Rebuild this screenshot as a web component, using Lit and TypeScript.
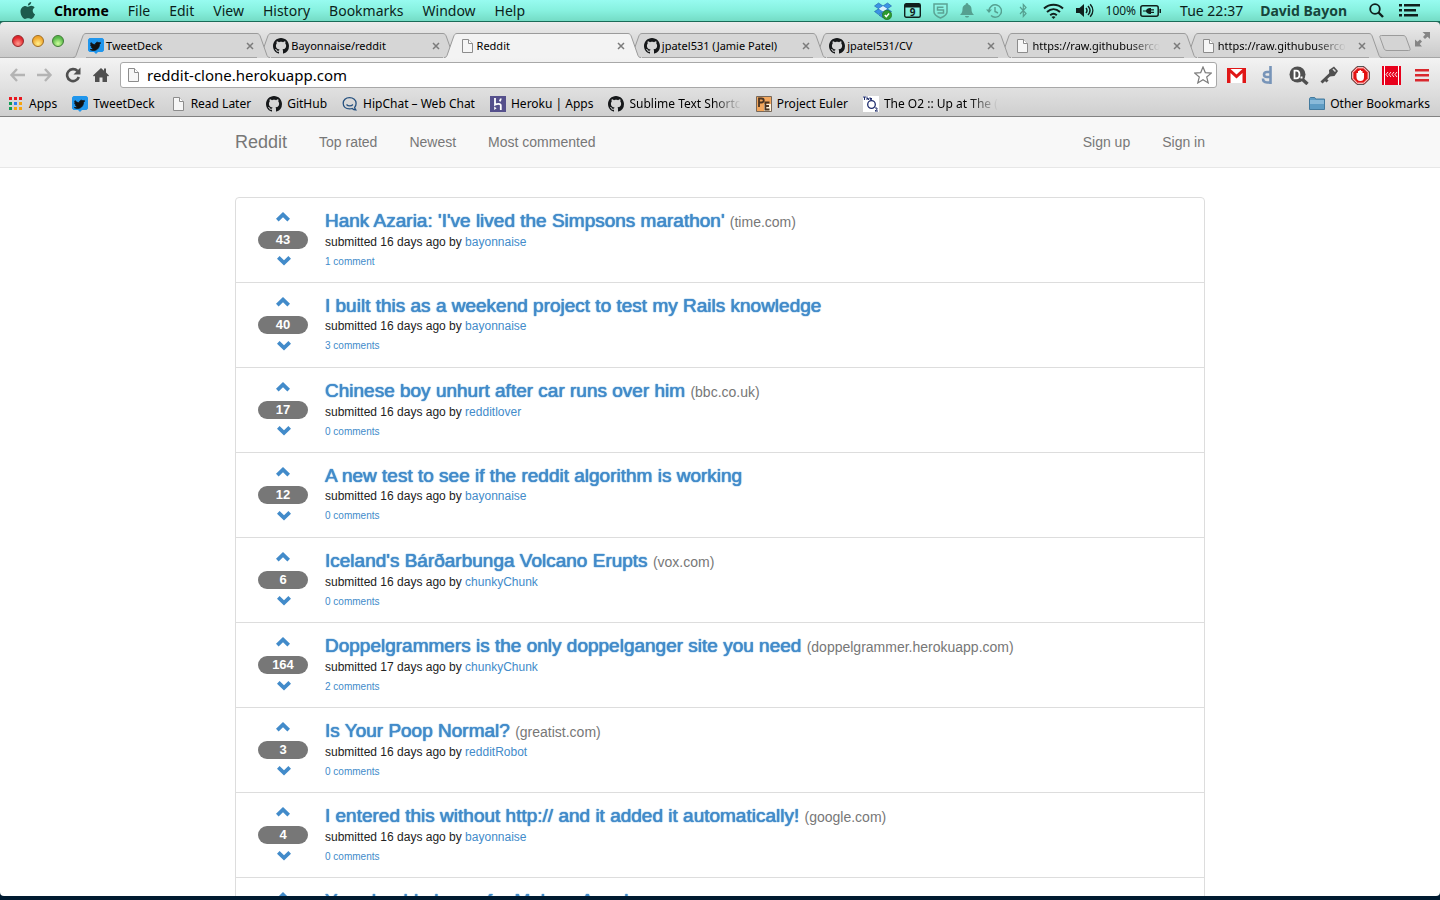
import { LitElement, html, svg, css, nothing } from "lit";
import { customElement } from "lit/decorators.js";
import { styleMap } from "lit/directives/style-map.js";

/* ---------- icons ---------- */

const birdPath =
  "M12.6 5.2c-.4.2-.8.3-1.2.4.4-.3.7-.7.9-1.2-.4.2-.9.4-1.3.5a2.1 2.1 0 0 0-3.6 1.9C5.600 6.700 4.100 5.900 3 4.600c-.6 1-.3 2.200.7 2.800-.4 0-.7-.1-1-.3 0 1 .7 1.900 1.700 2.100-.3.1-.6.1-.9 0 .3.800 1 1.400 1.900 1.500-.9.700-2 1-3.100.9 4 2.400 9.200-.1 9.200-5.300.4-.3.800-.700 1.100-1.100z";

const bird = svg`<path fill="#2196ec" d="M1.500 0h13L16 1.500v11L14.500 14H10l-2 2-2-2H1.500L0 12.500v-11z"/><path fill="#111" stroke="#111" stroke-width=".8" d=${birdPath}/>`;

const cat = svg`<path fill="#16181a" d="M8 0C3.580 0 0 3.580 0 8c0 3.540 2.290 6.530 5.470 7.590.4.070.55-.17.55-.38 0-.19-.01-.82-.01-1.490-2.010.37-2.530-.49-2.690-.94-.09-.23-.48-.94-.82-1.130-.28-.15-.68-.52-.01-.53.63-.01 1.080.58 1.230.82.72 1.210 1.870.87 2.330.66.070-.52.28-.87.51-1.070-1.780-.2-3.640-.89-3.640-3.950 0-.87.31-1.590.82-2.150-.08-.2-.36-1.020.08-2.120 0 0 .67-.21 2.200.82.64-.18 1.320-.27 2-.27s1.360.09 2 .27c1.530-1.040 2.200-.82 2.200-.82.44 1.100.16 1.920.08 2.120.51.56.82 1.270.82 2.150 0 3.070-1.870 3.750-3.650 3.950.29.25.54.73.54 1.480 0 1.070-.01 1.930-.01 2.200 0 .21.15.46.55.38A8.010 8.010 0 0 0 16 8c0-4.420-3.580-8-8-8z"/>`;

const sheet = svg`<path fill="#f6f6f6" stroke="#8c8c8c" d="M3.500 1.500h6l4 4v9h-10z"/><path fill="#fff" stroke="#8c8c8c" d="M9.500 1.500v4h4"/>`;

const apps = svg`
  <path fill="#e8171f" d="M1 1h3v3H1zM6 1h3v3H6zM11 1h3v3h-3z"/>
  <path fill="#109b54" d="M1 6h3v3H1zM1 11h3v3H1z"/>
  <path fill="#2a7df0" d="M6 6h3v3H6z"/>
  <path fill="#f6a40d" d="M11 6h3v3h-3zM6 11h3v3H6zM11 11h3v3h-3z"/>`;

const hipchat = svg`<path fill="none" stroke="#24507f" stroke-width="1.300" d="M7.500 1.600c-3.800 0-6.300 2.400-6.300 5.600s2.500 5.700 6.300 5.700c1 0 1.900-.1 2.700-.4 1 .9 2.300 1.500 3.600 1.400-.7-.8-1.100-1.600-1.200-2.500 1.100-1 1.500-2.500 1.500-4.200 0-3.200-2.800-5.600-6.600-5.600z"/><path fill="none" stroke="#24507f" stroke-width="1.200" d="M4.500 8.500c1.600 1.900 4.800 1.900 6.400 0"/>`;

const heroku = svg`<path fill="#55508c" d="M0 0h16v16H0z"/><path fill="none" stroke="#fff" stroke-width="1.800" d="M5 2v6.800c2-1 5.800-1.600 5.800.7V14M10.800 2.500c0 1-.4 2-1.200 2.700"/><path fill="#fff" d="M4.200 10.500L6.600 12.300 4.200 14z"/>`;

const euler = svg`<path fill="#f3a75d" stroke="#77685a" d="M.5.5h15v15H.5z"/><path fill="#fff3dd" d="M8 8h7v7H8z"/><path fill="none" stroke="#4b3422" stroke-width="1.800" d="M3 11V2.500h2.500c3 0 3 4 0 4H3M13.500 6.500H9.400v7h4.100M9.400 10h3.600"/>`;

const o2 = svg`<path fill="#fff" d="M0 0h16v16H0z"/><circle cx="8.500" cy="8.500" r="3.800" fill="none" stroke="#1c2a6b" stroke-width="1.300"/><path fill="none" stroke="#1c2a6b" d="M0 1h3M1.500 1v3M4 .5V4M4 2.500h1.500V4M7 2.500h2M7 1.300v2h2M12 12h2v1.500l-2 1.500h3"/>`;

const folder = svg`<path fill="#5e9cc4" stroke="#437a9e" d="M.5 2.500l.8-1h4.400l1 1.500h8.800v10.500H.5z"/><path fill="#9cc7e2" d="M1 4h14v4H1z" opacity=".7"/>`;

const icon = (body: unknown, w = 16, h = 16, vb = "0 0 16 16") =>
  html`<svg class="icon" width=${w} height=${h} viewBox=${vb} aria-hidden="true">${body}</svg>`;

/* ---------- data ---------- */

const menus = ["File", "Edit", "View", "History", "Bookmarks", "Window", "Help"];

const tabs = [
  { title: "TweetDeck", icon: bird },
  { title: "Bayonnaise/reddit", icon: cat },
  { title: "Reddit", icon: sheet, active: true },
  { title: "jpatel531 (Jamie Patel)", icon: cat },
  { title: "jpatel531/CV", icon: cat },
  { title: "https://raw.githubuserco", icon: sheet, long: true },
  { title: "https://raw.githubuserco", icon: sheet, long: true },
];

const bookmarks = [
  { title: "Apps", icon: apps },
  { title: "TweetDeck", icon: bird },
  { title: "Read Later", icon: sheet },
  { title: "GitHub", icon: cat },
  { title: "HipChat – Web Chat", icon: hipchat },
  { title: "Heroku | Apps", icon: heroku },
  { title: "Sublime Text Shortc", icon: cat, long: true },
  { title: "Project Euler", icon: euler },
  { title: "The O2 :: Up at The (", icon: o2, long: true },
];

const posts = [
  { title: "Hank Azaria: 'I've lived the Simpsons marathon'", site: "time.com", votes: 43, age: 16, by: "bayonnaise", comments: 1 },
  { title: "I built this as a weekend project to test my Rails knowledge", site: "", votes: 40, age: 16, by: "bayonnaise", comments: 3 },
  { title: "Chinese boy unhurt after car runs over him", site: "bbc.co.uk", votes: 17, age: 16, by: "redditlover", comments: 0 },
  { title: "A new test to see if the reddit algorithm is working", site: "", votes: 12, age: 16, by: "bayonnaise", comments: 0 },
  { title: "Iceland's Bárðarbunga Volcano Erupts", site: "vox.com", votes: 6, age: 16, by: "chunkyChunk", comments: 0 },
  { title: "Doppelgrammers is the only doppelganger site you need", site: "doppelgrammer.herokuapp.com", votes: 164, age: 17, by: "chunkyChunk", comments: 2 },
  { title: "Is Your Poop Normal?", site: "greatist.com", votes: 3, age: 16, by: "redditRobot", comments: 0 },
  { title: "I entered this without http:// and it added it automatically!", site: "google.com", votes: 4, age: 16, by: "bayonnaise", comments: 0 },
  { title: "You should always for Makers Ansel", site: "", votes: 2, age: 16, by: "bayonnaise", comments: 0 },
];

/* ---------- system menu bar ---------- */

@customElement("mac-menubar")
class MacMenubar extends LitElement {
  static styles = css`
    :host {
      display: flex;
      justify-content: space-between;
      align-items: center;
      height: 21px;
      padding: 0 20px;
      border-bottom: 1px solid #1c6b58;
      background: linear-gradient(#97fbf0, #87f1df 50%, #74dcc5);
      color: #0b1f1b;
      font: 14px/21px "Noto Sans", sans-serif;
    }
    .group { display: flex; align-items: center; gap: 19px; }
    .status { gap: 12px; }
    .item { border: 0; padding: 0; background: none; font: inherit; color: inherit; white-space: nowrap; }
    .app { font-weight: 700; color: #000; }
    .user { font-weight: 700; color: #17453b; padding-left: 5px; }
    .clock { padding-left: 7px; }
    .battery { display: flex; align-items: center; gap: 4px; font-size: 12px; }
    .icon { display: block; }
  `;
  render() {
    return html`
      <nav class="group" aria-label="Menu bar">
        ${icon(svg`<path fill="#1d5a4d" d="M11.200 0c.1 1.800-1.500 3.600-3.300 3.500C7.700 1.800 9.500.1 11.200 0zM8 4.700c.8 0 1.800-.9 3.300-.9 1.400 0 2.700.8 3.300 1.800-2.800 1.600-2.300 5.600.5 6.700-.7 2-2.200 4.700-3.900 4.700-1.200 0-1.700-.7-3.100-.7s-2 .7-3.100.7C3 17 .5 13.100.5 9.500c0-3.500 2.700-5.600 4.800-5.600 1.300 0 2.100.8 2.700.8z"/>`, 15, 18, "0 0 15 18")}
        <button class="item app">Chrome</button>
        ${menus.map((m) => html`<button class="item">${m}</button>`)}
      </nav>
      <div class="group status">
        ${icon(svg`<path fill="#3b93e4" stroke="#1b5fa8" stroke-width=".6" d="M4.500 1L9 4 4.700 6.800.5 4zM13.500 1L17.500 4 13.300 6.800 9 4zM.5 9.500l4.200-2.700L9 9.500l-4.500 3zM9 9.500l4.300-2.700 4.200 2.700-4 3zM9 10.500l4 2.700-4 2.600-4-2.600z"/><path fill="#d8f0ff" d="M9 4l4.300 2.800L9 9.500 4.700 6.800z"/><circle cx="13" cy="13" r="4.700" fill="#2e9a2f" stroke="#1b6a1d" stroke-width=".6"/><path d="M10.800 13l1.500 1.600 2.800-3.100" fill="none" stroke="#fff" stroke-width="1.400"/>`, 18, 18, "0 0 18 18")}
        ${icon(svg`<rect x=".7" y=".7" width="15.600" height="13.600" rx="1.500" fill="none" stroke="#10201d" stroke-width="1.400"/><path fill="#10201d" d="M1 1h15v3.500H1z"/><text x="8.500" y="13" text-anchor="middle" font-size="10" font-weight="700" fill="#10201d">9</text>`, 17, 15, "0 0 17 15")}
        ${icon(svg`<g fill="none" stroke="#5ba394" stroke-width="1.500"><path d="M1 1h13v8c0 3-3 4.500-6.500 6C4 13.500 1 12 1 9z"/><path d="M10.500 4.200h-6v2.900h6V10h-6"/></g>`, 15, 16, "0 0 15 16")}
        ${icon(svg`<path fill="#55a090" d="M7 0c1 0 1.300.8 1.300 1.400C10.500 2 11.500 4 11.500 6c0 3 .8 4.500 2.500 6H0c1.700-1.500 2.500-3 2.500-6 0-2 1-4 3.200-4.600C5.700.8 6 0 7 0zM5 13h4c0 2-4 2-4 0z"/>`, 14, 15, "0 0 14 15")}
        ${icon(svg`<g fill="none" stroke="#55a090" stroke-width="1.400"><path d="M3 8a6.200 6.200 0 1 1 2 4.600M9 4v4.500l3 1.500"/></g><path fill="#55a090" d="M0 6.500h6L3 10z"/>`, 16, 16, "0 0 16 16")}
        ${icon(svg`<path fill="none" stroke="#55a090" stroke-width="1.200" d="M1 4l6 6.500L4.300 13.500V1.500L7 4.500 1 11"/>`, 17, 15, "-5 0 17 15")}
        ${icon(svg`<g fill="none" stroke="#10201d" stroke-width="2"><path d="M1 5.500c5.500-5 13.500-5 19 0M4 9c4-3.600 9-3.600 13 0M7.200 12.200c2-1.700 4.600-1.700 6.600 0"/></g><path fill="#10201d" d="M8.500 14c1.200-1 2.800-1 4 0l-2 2z"/>`, 21, 16, "0 0 21 16")}
        ${icon(svg`<path fill="#10201d" d="M0 5h3.500L8 1v13L3.500 10H0z"/><g fill="none" stroke="#10201d" stroke-width="1.500"><path d="M10 5c1.200 1.500 1.200 3.500 0 5M12 3c2.400 2.700 2.400 6.300 0 9M14.200 1.200c3.400 3.800 3.400 8.800 0 12.600"/></g>`, 18, 15, "0 0 18 15")}
        <span class="battery">100%
          ${icon(svg`<rect x=".8" y=".8" width="17.400" height="10.400" rx="2" fill="none" stroke="#10201d" stroke-width="1.500"/><path fill="#10201d" d="M19.500 4H21v4h-1.500zM3 5.500h3C6.500 4 8 3 10 3h1v1.300h3v1.200h-3v1.200h3v1.200h-3V9h-1C8 9 6.500 8 6 6.500H3z"/>`, 21, 12, "0 0 21 12")}
        </span>
        <span class="item clock">Tue 22:37</span>
        <button class="item user">David Bayon</button>
        ${icon(svg`<circle cx="6" cy="6" r="4.800" fill="none" stroke="#10201d" stroke-width="1.800"/><path stroke="#10201d" stroke-width="2.400" d="M9.500 9.500L14 14"/>`, 28, 15, "-10 0 28 15")}
        ${icon(svg`<path fill="#10201d" d="M0 0h3v2.500H0zM5 0h16v2.500H5zM0 5h3v2.500H0zM5 5h12v2.500H5zM0 10h3v2.500H0zM5 10h14v2.500H5z"/>`, 21, 13, "0 0 21 13")}
      </div>`;
  }
}

/* ---------- browser chrome ---------- */

@customElement("browser-chrome")
class BrowserChrome extends LitElement {
  static styles = css`
    :host { display: block; background: #1c6b58; font: 12px/16px "Noto Sans", sans-serif; color: #000; }
    .frame { border-radius: 4px 4px 0 0; background: linear-gradient(#ececec, #c9c9c9 36px, #f3f3f3 36px, #cfcfcf); border-bottom: 1px solid #828282; }
    .icon { display: block; flex: none; }
    button { border: 0; padding: 0; margin: 0; background: none; font: inherit; color: inherit; }
    a { color: inherit; text-decoration: none; }

    .strip { display: flex; align-items: flex-end; height: 36px; padding-right: 10px; box-sizing: border-box; border-bottom: 1px solid #a5a5a5; font-size: 11px; }
    .lights { display: flex; gap: 8px; padding: 0 9px 10px 12px; flex: none; }
    .light { width: 12px; height: 12px; border-radius: 50%; box-sizing: border-box; }
    .red { background: radial-gradient(circle at 50% 75%, #ff9c90, #e2262c 65%); border: 1px solid #93262a; }
    .amber { background: radial-gradient(circle at 50% 75%, #fff08c, #f0a62c 65%); border: 1px solid #a06c20; }
    .green { background: radial-gradient(circle at 50% 75%, #d0ff9c, #58b94a 65%); border: 1px solid #3f7a35; }
    .tabs { display: flex; flex: 1; min-width: 0; padding-right: 12px; margin-bottom: -1px; }
    .tab { display: flex; flex: 1 1 0; min-width: 0; height: 25px; margin-right: -12px; }
    .edge { display: block; flex: none; }
    .face { flex: 1; min-width: 0; display: flex; align-items: center; gap: 2px; box-sizing: border-box; border-top: 1px solid #9b9b9b; border-bottom: 1px solid #a5a5a5; background: #d6d6d6; }
    .tab .face { padding: 0 2px; }
    .active .face { background: #f3f3f3; border-bottom-color: #f3f3f3; }
    .label { flex: 1; min-width: 0; text-align: left; white-space: nowrap; }
    .fade { mask-image: linear-gradient(90deg, #000 75%, transparent); }
    .close { flex: none; width: 10px; height: 10px; }
    .extra { display: flex; align-items: center; gap: 4px; padding-bottom: 4px; margin-left: -3px; flex: none; }
    .full { padding-bottom: 6px; }

    .toolbar { display: flex; align-items: center; height: 34px; padding: 0 11px 0 9px; box-sizing: border-box; }
    .nav { display: flex; align-items: center; gap: 12px; padding-right: 11px; }
    .omni { display: flex; align-items: center; flex: 1; height: 26px; padding: 0 4px; gap: 6px; box-sizing: border-box; border: 1px solid #a8a8a8; border-radius: 3px; background: #fff; }
    .url { flex: 1; min-width: 0; border: 0; padding: 0; outline: 0; background: none; font: 15px/20px "Noto Sans", sans-serif; color: #000; }
    .ext { display: flex; align-items: center; gap: 11px; padding-left: 10px; }

    .marks { display: flex; align-items: center; height: 24px; padding: 0 10px 0 8px; box-sizing: border-box; }
    .mark { display: flex; align-items: center; gap: 5px; margin-right: 15px; white-space: nowrap; }
    .other { margin: 0 0 0 auto; }
  `;

  private tab(t: (typeof tabs)[number], i: number) {
    const fill = t.active ? "#f3f3f3" : "#d6d6d6";
    return html`
      <div class="tab ${t.active ? "active" : ""}" style=${styleMap({ zIndex: String(t.active ? 20 : 10 - i) })}>
        <svg class="edge" width="13" height="25" aria-hidden="true"><path fill=${fill} d="M0 25c2 0 2.500-1 3-2L9.500 4c.7-2 1.500-3.500 3.500-3.500V25z"/><path fill="none" stroke="#9b9b9b" d="M0 24.500c2 0 2.500-1 3-2L9.500 4c.7-2 1.500-3.500 3.500-3.500"/></svg>
        <button class="face">${icon(t.icon)}<span class="label"><span class=${t.long ? "fade" : ""}>${t.title}</span></span>
          <svg class="close" viewBox="0 0 10 10" role="img" aria-label="Close"><path stroke="#7b7b7b" stroke-width="1.500" d="M2 2l6 6M8 2l-6 6"/></svg>
        </button>
        <svg class="edge" width="13" height="25" aria-hidden="true"><path fill=${fill} d="M13 25c-2 0-2.500-1-3-2L3.500 4C2.800 2 2 .5 0 .5V25z"/><path fill="none" stroke="#9b9b9b" d="M13 24.500c-2 0-2.500-1-3-2L3.500 4C2.800 2 2 .5 0 .5"/></svg>
      </div>`;
  }

  render() {
    return html`<div class="frame">
      <div class="strip">
        <div class="lights"><button class="light red" aria-label="Close"></button><button class="light amber" aria-label="Minimise"></button><button class="light green" aria-label="Zoom"></button></div>
        <div class="tabs">${tabs.map((t, i) => this.tab(t, i))}</div>
        <div class="extra">
          <button aria-label="New tab">${icon(svg`<path fill="#d4d4d4" stroke="#9b9b9b" d="M2.500.5H24c2 0 2.500 1 3 2l4 11c.5 1.500 0 2-1.500 2H8c-2 0-2.500-1-3-2l-4-11c-.5-1.500 0-2 1.500-2z"/>`, 32, 16, "0 0 32 16")}</button>
          <button class="full" aria-label="Full screen">${icon(svg`<path fill="#858585" d="M7.500 0H15v7l-2.500-2.300L10 7 8 5l2.300-2.500zM0 7.500l2.500 2.300L5 7.500l2 2-2.300 2.500L7 14.500H0z"/>`, 15, 15, "0 0 15 15")}</button>
        </div>
      </div>
      <div class="toolbar">
        <div class="nav">
          <button aria-label="Back">${icon(svg`<path fill="none" stroke="#b4b4b4" stroke-width="2.400" d="M8 2L2.500 8 8 14M2.500 8H16"/>`)}</button>
          <button aria-label="Forward">${icon(svg`<path fill="none" stroke="#b4b4b4" stroke-width="2.400" d="M8 2l5.500 6L8 14M13.500 8H0"/>`)}</button>
          <button aria-label="Reload">${icon(svg`<path fill="none" stroke="#505050" stroke-width="2.600" d="M12.500 4A6 6 0 1 0 13.800 10"/><path fill="#505050" d="M15.500.5v7H8.500z"/>`)}</button>
          <button aria-label="Home">${icon(svg`<path fill="#505050" d="M8 1l3 2.700V1.500h2v4L16 8.500l-1 1-1-.8V15H9.500v-4.500h-3V15H2V8.700l-1 .8-1-1z"/>`)}</button>
        </div>
        <div class="omni">${icon(sheet)}<input class="url" aria-label="Address" .value=${"reddit-clone.herokuapp.com"}>
          <button aria-label="Bookmark">${icon(svg`<path fill="#fff" stroke="#7c7c7c" stroke-width="1.200" d="M9 1l2.300 5.600 6 .5-4.600 3.900 1.500 5.900L9 13.700 3.800 16.900l1.500-5.900L.7 7.100l6-.5z"/>`, 18, 18, "0 0 18 18")}</button></div>
        <div class="ext">
          <button aria-label="Gmail">${icon(svg`<path fill="#fff" d="M0 0h19v15H0z"/><path fill="#e01717" d="M0 0h19v15h-3.500V5l-6 5.500L3.500 5v10H0z"/><path fill="#fff" d="M3.500 1h12l-6 5.500z"/>`, 20, 15, "0 0 20 15")}</button>
          <button aria-label="Diigo">${icon(svg`<g fill="none" stroke="#7794b8" stroke-width="2.600"><path d="M12.500 0v18M12.500 6H9c-4 0-4 5 0 5h3.500"/><path d="M12.500 16.500H9c-3 0-4-1.500-4-4"/></g>`, 20, 18, "0 0 20 18")}</button>
          <button aria-label="Search">${icon(svg`<circle cx="8.500" cy="8.500" r="8" fill="#505050"/><path d="M13.500 13.500l5 4.500" stroke="#505050" stroke-width="3.400"/><path fill="none" stroke="#fff" stroke-width="1.800" d="M5.500 4.700v7.600h1.800c4.200 0 4.200-7.600 0-7.600z"/><path fill="#fff" d="M11.500 10.500h2v2h-2z"/>`, 20, 19, "0 0 20 19")}</button>
          <button aria-label="Password">${icon(svg`<path stroke="#505050" stroke-width="3" d="M1.500 16.500L11 7.500M5 13l2.500 2.500"/><path fill="#505050" d="M9 4l5-3.500L18 5l-3.500 5-5 .5z"/><path stroke="#ddd" stroke-width="1.500" d="M13 3l2.500 2.500"/>`, 20, 18, "0 0 20 18")}</button>
          <button aria-label="Ad blocker">${icon(svg`<path fill="#e31212" stroke="#555" d="M6 .5h7L18.500 6v7L13 18.500H6L.5 13V6z"/><path fill="none" stroke="#fff" d="M6.500 1.800h6L17.200 6.500v6l-4.700 4.700h-6L1.800 12.500v-6z"/><path fill="#fff" d="M5.500 7H7V5h1.500V4H10v1h1.500v2H13v4.500C13 14 11.500 15 9.500 15c-3 0-4-2-4-4z"/>`, 20, 19, "0 0 20 19")}</button>
          <button aria-label="Reader">${icon(svg`<path fill="#e8001c" d="M0 0h19v19H0z"/><path stroke="#fff" d="M2.500 0v19M16.500 0v19"/><path fill="none" stroke="#fff" stroke-width=".9" d="M6 6L4 8.500 6 11M9 6L7 8.500 9 11M12 6l-2 2.500L12 11M15 6l-2 2.500L15 11"/>`, 20, 19, "0 0 20 19")}</button>
          <button aria-label="Menu">${icon(svg`<path fill="#d9282e" d="M2 1h14v2.500H2zM2 6h14v2.500H2zM2 11h14v2.500H2z"/>`, 16, 15, "0 0 16 15")}</button>
        </div>
      </div>
      <nav class="marks" aria-label="Bookmarks">
        ${bookmarks.map((b) => html`<a class="mark" href="#">${icon(b.icon)}<span class=${b.long ? "fade" : ""}>${b.title}</span></a>`)}
        <a class="mark other" href="#">${icon(folder)}Other Bookmarks</a>
      </nav>
    </div>`;
  }
}

/* ---------- web page ---------- */

@customElement("reddit-page")
class RedditPage extends LitElement {
  static styles = css`
    :host { display: block; background: #fff; color: #333; font: 14px/20px "Liberation Sans", sans-serif; padding-bottom: 20px; }
    a { color: #428bca; text-decoration: none; }
    .navbar { background: #f8f8f8; border-bottom: 1px solid #e7e7e7; }
    .container { max-width: 970px; margin: 0 auto; box-sizing: border-box; }
    .bar { display: flex; align-items: center; gap: 32px; height: 50px; }
    .bar a { color: #777; }
    .bar .brand { font-size: 18px; }
    .push { margin-left: auto; }
    .list { list-style: none; padding: 0; margin-top: 29px; border: 1px solid #ddd; border-radius: 4px; }
    .post { display: flex; gap: 17px; height: 84px; padding-left: 22px; border-bottom: 1px solid #ddd; }
    .votes { display: flex; flex-direction: column; align-items: center; gap: 7px; width: 50px; padding-top: 14px; }
    .vote { display: block; border: 0; padding: 0; background: none; height: 12px; }
    .icon { display: block; }
    .badge { width: 50px; border-radius: 9px; background: #777; color: #fff; font-size: 13px; line-height: 18px; font-weight: 700; text-align: center; }
    .body { padding-top: 13px; }
    .title { margin: 0; font-size: 19px; line-height: 20px; font-weight: 400; }
    .title a { text-shadow: 0 0 1px #428bca, 0 0 1px #428bca; }
    .site { font-size: 14px; color: #777; }
    .meta { margin: 0; font-size: 12px; line-height: 20px; color: #222; }
    .comments { display: block; font-size: 10px; line-height: 20px; }
  `;
  render() {
    const arrow = (d: string) => icon(svg`<path fill="#428bca" d=${d}/>`, 16, 12, "0 1 16 12");
    return html`
      <header class="navbar"><nav class="container bar">
        <a class="brand" href="#">Reddit</a><a href="#">Top rated</a><a href="#">Newest</a><a href="#">Most commented</a>
        <a class="push" href="#">Sign up</a><a href="#">Sign in</a>
      </nav></header>
      <ul class="container list">
        ${posts.map((p) => html`<li class="post">
          <div class="votes">
            <button class="vote" aria-label="Vote up">${arrow("M8 1l7 6.800-2.600 2.700L8 6.200l-4.400 4.300L1 7.800z")}</button>
            <span class="badge">${p.votes}</span>
            <button class="vote" aria-label="Vote down">${arrow("M9 10.500L2 3.700 4.600 1 9 5.300 13.400 1 16 3.700z")}</button>
          </div>
          <div class="body">
            <h4 class="title"><a href="#">${p.title}</a>${p.site ? html` <span class="site">(${p.site})</span>` : nothing}</h4>
            <p class="meta">submitted ${p.age} days ago by <a href="#">${p.by}</a></p>
            <a class="comments" href="#">${p.comments} ${p.comments === 1 ? "comment" : "comments"}</a>
          </div>
        </li>`)}
      </ul>`;
  }
}

@customElement("app-root")
class AppRoot extends LitElement {
  static styles = css`
    :host { display: flex; flex-direction: column; height: 100vh; background: #001a30; }
    .page { flex: 1; min-height: 0; overflow: hidden; border-radius: 0 0 4px 4px; background: #fff; margin-bottom: 4px; }
  `;
  render() {
    return html`<mac-menubar></mac-menubar><browser-chrome></browser-chrome><main class="page"><reddit-page></reddit-page></main>`;
  }
}
